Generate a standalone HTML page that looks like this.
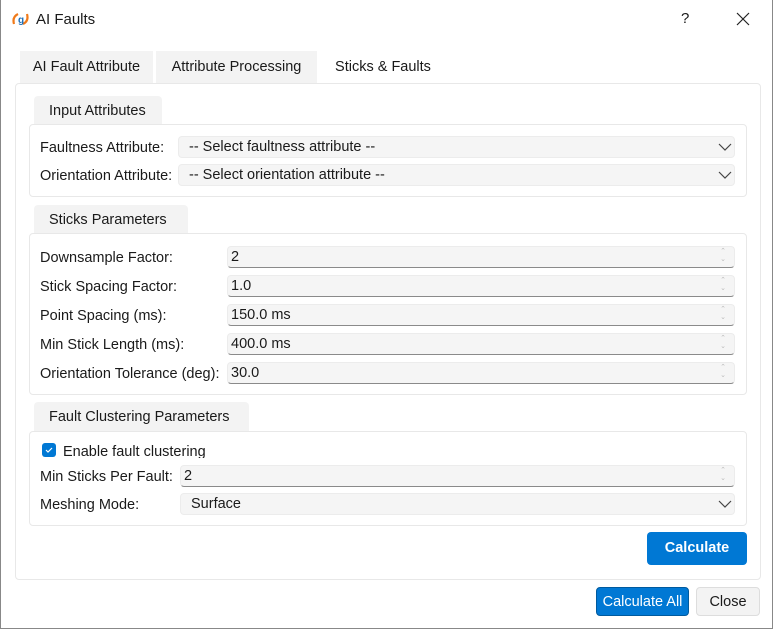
<!DOCTYPE html>
<html><head><style>
*{box-sizing:border-box;margin:0;padding:0}
body{width:773px;height:629px;background:#fff;font-family:"Liberation Sans",sans-serif;font-size:14px;color:#1a1a1a;position:relative;overflow:hidden;border-left:1px solid #888;border-right:1px solid #888;border-bottom:1px solid #888}
.a{position:absolute}
.tab{position:absolute;top:51px;height:32px;background:#f3f3f3;line-height:32px;text-align:center;font-size:14.5px}
.panel{left:14px;top:83px;width:746px;height:497px;border:1px solid #e8e8e8;border-radius:4px}
.gt{position:absolute;left:33px;height:30px;background:#f3f3f3;border-radius:4px 4px 0 0;line-height:30px;padding-left:15px;font-size:14.5px}
.box{position:absolute;left:28px;width:718px;border:1px solid #e8e8e8;border-radius:4px;background:#fff}
.lbl{position:absolute;left:39px;font-size:14.5px;line-height:21px;margin-top:2px}
.cb{position:absolute;height:22px;background:#f5f5f5;border:1px solid #ececec;border-radius:4px;line-height:21px;padding-left:10px;font-size:14.5px}
.cb svg{position:absolute;right:2px;top:5px}
.sp{position:absolute;height:22px;background:#f5f5f5;border:1px solid #ececec;border-bottom:1px solid #8a8a8a;border-radius:4px;line-height:21px;padding-left:3px;font-size:14.5px}
.sp:after{content:"⌃\A⌄";white-space:pre;position:absolute;right:8px;top:1px;font-size:7px;line-height:8px;color:#bbb}
.btn{position:absolute;border-radius:4px;text-align:center;font-size:14.5px}
</style></head><body>
<svg class="a" style="left:10px;top:11px" width="20" height="16" viewBox="0 0 20 16"><path d="M3 13 Q1 6 7 3" stroke="#f07a1a" stroke-width="2.2" fill="none"/><path d="M16 3 Q18 10 12 13" stroke="#f07a1a" stroke-width="2.2" fill="none"/><text x="7" y="12" font-size="10" font-weight="bold" fill="#1e6fb8" font-family="Liberation Sans">g</text></svg>
<div class="a" style="left:35px;top:11px;font-size:15px">AI Faults</div>
<div class="a" style="left:680px;top:10px;font-size:15px">?</div>
<svg class="a" style="left:735px;top:12px" width="14" height="14"><path d="M1 1L13 13M13 1L1 13" stroke="#222" stroke-width="1.2"/></svg>

<div class="tab" style="left:19px;width:133px">AI Fault Attribute</div>
<div class="tab" style="left:155px;width:161px">Attribute Processing</div>
<div class="tab" style="left:318px;width:128px;background:#fff">Sticks &amp; Faults</div>
<div class="a panel"></div>

<div class="gt" style="top:96px;width:128px">Input Attributes</div>
<div class="box" style="top:124px;height:73px"></div>
<div class="lbl" style="top:136px">Faultness Attribute:</div>
<div class="cb" style="left:177px;top:136px;width:557px">-- Select faultness attribute --<svg width="14" height="10"><path d="M1 2L7 8L13 2" stroke="#444" fill="none" stroke-width="1.2"/></svg></div>
<div class="lbl" style="top:164px">Orientation Attribute:</div>
<div class="cb" style="left:177px;top:164px;width:557px">-- Select orientation attribute --<svg width="14" height="10"><path d="M1 2L7 8L13 2" stroke="#444" fill="none" stroke-width="1.2"/></svg></div>

<div class="gt" style="top:205px;width:154px">Sticks Parameters</div>
<div class="box" style="top:233px;height:162px"></div>
<div class="lbl" style="top:246px">Downsample Factor:</div><div class="sp" style="left:226px;top:246px;width:508px">2</div>
<div class="lbl" style="top:275px">Stick Spacing Factor:</div><div class="sp" style="left:226px;top:275px;width:508px">1.0</div>
<div class="lbl" style="top:304px">Point Spacing (ms):</div><div class="sp" style="left:226px;top:304px;width:508px">150.0 ms</div>
<div class="lbl" style="top:333px">Min Stick Length (ms):</div><div class="sp" style="left:226px;top:333px;width:508px">400.0 ms</div>
<div class="lbl" style="top:362px">Orientation Tolerance (deg):</div><div class="sp" style="left:226px;top:362px;width:508px">30.0</div>

<div class="gt" style="top:402px;width:215px">Fault Clustering Parameters</div>
<div class="box" style="top:431px;height:95px"></div>
<div class="a" style="left:41px;top:443px;width:14px;height:14px;background:#0078d4;border-radius:3px"><svg width="14" height="14"><path d="M4 7L6 9L10 5" stroke="#fff" fill="none" stroke-width="1.2"/></svg></div>
<div class="lbl" style="left:62px;top:440px;height:16px;overflow:hidden">Enable fault clustering</div>
<div class="lbl" style="top:465px">Min Sticks Per Fault:</div><div class="sp" style="left:179px;top:465px;width:555px">2</div>
<div class="lbl" style="top:493px">Meshing Mode:</div>
<div class="cb" style="left:179px;top:493px;width:555px">Surface<svg width="14" height="10"><path d="M1 2L7 8L13 2" stroke="#444" fill="none" stroke-width="1.2"/></svg></div>

<div class="btn" style="left:646px;top:532px;width:100px;height:33px;background:#0078d4;color:#fff;font-weight:bold;line-height:33px">Calculate</div>
<div class="btn" style="left:595px;top:587px;width:93px;height:29px;background:#0078d4;color:#fff;line-height:28px;border:1px solid #005a9e">Calculate All</div>
<div class="btn" style="left:695px;top:587px;width:64px;height:29px;background:#f3f3f3;border:1px solid #ddd;line-height:28px">Close</div>
</body></html>
